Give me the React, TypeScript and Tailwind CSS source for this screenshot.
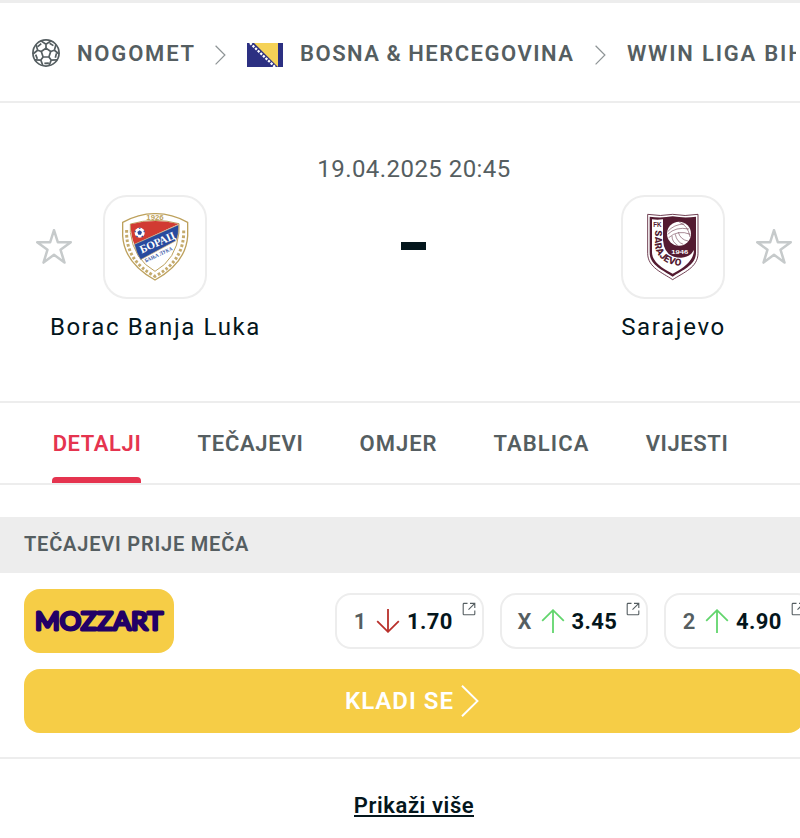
import React from "react"
import { clsx } from "clsx"

const tabs = [
  { label: "DETALJI", className: "w-[89px] tracking-[0.6px]" },
  { label: "TEČAJEVI", className: "w-[106px] tracking-[0.7px]" },
  { label: "OMJER", className: "w-[78px] tracking-[1px]" },
  { label: "TABLICA", className: "w-[96px] tracking-[1.1px]" },
  { label: "VIJESTI", className: "w-[83px] tracking-[0.6px]" },
]

const odds = [
  { pick: "1", value: "1.70", trend: "down" },
  { pick: "X", value: "3.45", trend: "up" },
  { pick: "2", value: "4.90", trend: "up" },
]

const angles = [0, 72, 144, 216, 288]

function BallIcon() {
  return (
    <svg className="-mt-[2px] h-7 w-7 shrink-0" viewBox="-14 -14 28 28" fill="none" stroke="#555e61" strokeWidth="1.7" strokeLinejoin="round">
      <circle r="13.1" />
      <path d="M0-4.9 4.7-1.5 2.9 4H-2.9L-4.7-1.5Z" />
      {angles.map((a) => (
        <path key={a} transform={`rotate(${a})`} d="M0-4.9V-8.8M-5-12.1 0-8.8 5-12.1M3.6-9.8 7.4-7.4" />
      ))}
    </svg>
  )
}

function Chevron() {
  return (
    <svg className="mt-[3px] h-5 w-3 shrink-0" viewBox="0 0 12 20" fill="none" stroke="#8e9496" strokeWidth="1.2">
      <path d="M.6.8 9.9 10 .6 19.4" />
    </svg>
  )
}

function Flag() {
  return (
    <svg className="mt-[3px] h-6 w-9 shrink-0" viewBox="0 0 36 24">
      <path fill="#2c3082" d="M0 0h36v24H0z" />
      <path fill="#f5d257" d="M7 0h24v24z" />
      <path d="M3 0 28 24" stroke="#fff" strokeWidth="2.3" strokeDasharray="2.3 1.3" />
    </svg>
  )
}

function Star() {
  return (
    <svg className="h-9 w-9 shrink-0" viewBox="0 0 36 36" fill="none" stroke="#c6cacb" strokeWidth="2.5" strokeLinejoin="round">
      <path d="M18 1.2 21.8 13.2H34.8L24.5 20.7 28.5 33.6 18 25.8 7.5 33.6 11.5 20.7 1.2 13.2H14.2Z" />
    </svg>
  )
}

function BoracCrest() {
  return (
    <svg className="h-[90px] w-[90px]" viewBox="0 6 270 270">
      <path d="M38 67Q88 40 135 41Q184 40 233 67V108Q228 189 135 240Q43 189 38 108Z" fill="#fff" stroke="#bda15c" strokeWidth="4" />
      <path d="M50 90Q46 182 135 229Q224 182 221 90" fill="none" stroke="#c4aa6c" strokeWidth="9" strokeDasharray="8 6" />
      <path d="M61 72Q135 51 207 71V98Q199 178 135 214Q71 178 61 98Z" fill="#fff" stroke="#bda15c" strokeWidth="3" />
      <path d="M62 73Q135 53 206 72L73 133Q63 111 62 73Z" fill="#d13b32" />
      <path d="M73 133 206 74Q207 101 200 121L92 179Q80 163 73 133Z" fill="#284a9e" stroke="#c8ad77" strokeWidth="2" />
      <circle cx="89" cy="98" r="15" fill="#fff" />
      <path d="M89 91 96 96 93 104H85L82 96Z" fill="#284a9e" />
      <path d="M89 83V86M104 94 101 95M98 111 96 108M80 111 82 108M74 94 77 95" stroke="#284a9e" strokeWidth="5" />
      <text x="135" y="59" textAnchor="middle" textLength="52" lengthAdjust="spacingAndGlyphs" fontFamily="Liberation Sans, sans-serif" fontSize="20" fontWeight="700" fill="#bda15c">1926</text>
      <g transform="rotate(-24 143 127)">
        <text x="142" y="138" textAnchor="middle" textLength="112" lengthAdjust="spacingAndGlyphs" fontFamily="Liberation Serif, serif" fontSize="34" fontWeight="700" fill="#fff">БОРАЦ</text>
      </g>
      <g transform="rotate(-25 148 164)">
        <text x="146" y="168" textAnchor="middle" textLength="90" lengthAdjust="spacingAndGlyphs" fontFamily="Liberation Serif, serif" fontSize="16" fontWeight="700" fill="#284a9e">БАЊА ЛУКА</text>
      </g>
    </svg>
  )
}

function SarajevoCrest() {
  return (
    <svg className="h-[90px] w-[90px]" viewBox="-6 6 270 270">
      <path d="M53 43Q92 50 128 43Q165 50 204 43V160C204 202 160 218 128 239C97 218 53 202 53 160Z" fill="#fff" stroke="#541b31" strokeWidth="2.5" />
      <path d="M59 50Q93 55 128 49Q164 55 198 50V158C198 195 158 210 128 230C98 210 59 195 59 158Z" fill="#541b31" />
      <path d="M66 58Q82 60 99 58V121Q103 174 154 173Q181 171 192 150Q191 190 128 221Q66 191 66 157Z" fill="#fff" />
      <circle cx="147" cy="101" r="36" fill="#fff" />
      <g fill="none" stroke="#541b31" strokeWidth="1.5">
        <path d="M113 95Q131 73 163 72M113 103Q137 79 177 87M116 113Q144 88 181 103M145 97Q151 119 174 123M136 103Q140 126 160 133M126 108Q126 126 143 136M148 67Q174 76 180 111" />
      </g>
      <text x="149" y="161" textAnchor="middle" textLength="51" lengthAdjust="spacingAndGlyphs" fontFamily="Liberation Sans, sans-serif" fontSize="18" fontWeight="700" fill="#fff">1946</text>
      <text x="82" y="81" textAnchor="middle" textLength="25" lengthAdjust="spacingAndGlyphs" fontFamily="Liberation Sans, sans-serif" fontSize="19" fontWeight="700" fill="#541b31">FK</text>
      <path id="club-name-curve" d="M74 91V126Q76 196 166 199" fill="none" />
      <text fontFamily="Roboto, sans-serif" fontSize="29" fontWeight="900" letterSpacing="0.8" fill="#541b31">
        <textPath href="#club-name-curve">SARAJEVO</textPath>
      </text>
    </svg>
  )
}

function Team({ name, children }: { name: string; children: React.ReactNode }) {
  return (
    <div className="flex flex-col items-center">
      <div className="flex h-[104px] w-[104px] items-center justify-center rounded-3xl border-2 border-[#ededed]">{children}</div>
      <div className="mt-3 h-8 pl-px text-2xl leading-8 tracking-[1.65px] whitespace-nowrap text-[#04161c]">{name}</div>
    </div>
  )
}

function TrendArrow({ trend }: { trend: string }) {
  return (
    <svg className="h-6 w-6 shrink-0" viewBox="0 0 24 24" fill="none" stroke={trend === "up" ? "#62d56d" : "#b9302b"} strokeWidth="1.8">
      {trend === "up" ? <path d="M12 24V1.2M1.2 11.8 12 1.2 22.8 11.8" /> : <path d="M12 0V22.8M1.2 12.2 12 22.8 22.8 12.2" />}
    </svg>
  )
}

function ExternalIcon() {
  return (
    <svg className="absolute top-[7px] right-[6px] h-3.5 w-3.5" viewBox="0 0 14 14" fill="none" stroke="#555e61" strokeWidth="1.1">
      <path d="M5.5 1.4H2Q1.2 1.4 1.2 2.2V12Q1.2 12.8 2 12.8H12Q12.8 12.8 12.8 12V8.5M8 1.4H12.8V6M12.8 1.4 6.5 7.6" />
    </svg>
  )
}

export default function App() {
  return (
    <div className="h-[838px] w-[800px] overflow-hidden bg-white font-['Roboto',sans-serif] text-[#555e61]">
      <div className="w-[828px]">
        <nav className="h-[103px] border-t-[3px] border-b-2 border-[#ededed]">
          <div className="flex h-full w-[796px] items-center overflow-hidden pt-[3px] pl-8 text-[22px] font-semibold whitespace-nowrap">
            <BallIcon />
            <span className="ml-[17px] w-[138px] shrink-0 tracking-[1.8px]">NOGOMET</span>
            <Chevron />
            <div className="w-5 shrink-0" />
            <Flag />
            <span className="ml-[17px] w-[295px] shrink-0 tracking-[1.5px] [word-spacing:-1px]">BOSNA &amp; HERCEGOVINA</span>
            <Chevron />
            <span className="ml-5 shrink-0 tracking-[1.8px]">WWIN LIGA BIH</span>
          </div>
        </nav>

        <section className="flex h-[300px] border-b-2 border-[#ededed] pt-[92px]">
          <div className="flex w-[103px] shrink-0 pt-[34px] pl-9">
            <Star />
          </div>
          <div className="flex w-[104px] shrink-0 justify-center">
            <Team name="Borac Banja Luka"><BoracCrest /></Team>
          </div>
          <div className="-mt-[42px] flex flex-1 flex-col items-center">
            <div className="text-2xl leading-8 tracking-[0.45px] whitespace-nowrap">19.04.2025 20:45</div>
            <div className="mt-[57px] mr-[2px] h-2 w-[25px] bg-[#04161c]" />
          </div>
          <div className="flex w-[104px] shrink-0 justify-center">
            <Team name="Sarajevo"><SarajevoCrest /></Team>
          </div>
          <div className="flex w-[103px] shrink-0 pt-[34px] pl-[31px]">
            <Star />
          </div>
        </section>

        <div className="flex h-[82px] gap-14 border-b-2 border-[#ededed] pl-[52px]">
          {tabs.map((tab, i) => (
            <div
              key={tab.label}
              className={clsx("flex h-20 shrink-0 flex-col items-center justify-between text-[22px] font-semibold whitespace-nowrap", tab.className, i === 0 && "text-[#e5344f]")}
            >
              <span className="pt-[25px] pl-px leading-8">{tab.label}</span>
              {i === 0 && <div className="h-1.5 w-full rounded-t-[4px] bg-[#e5344f]" />}
            </div>
          ))}
        </div>

        <h2 className="mt-8 flex h-14 items-center bg-[#ededed] pb-0.5 pl-6 text-[20px] font-semibold tracking-[0.8px]">TEČAJEVI PRIJE MEČA</h2>

        <div className="h-[186px] border-b-2 border-[#ededed] pt-4 pl-6">
          <div className="flex items-center">
            <div className="flex h-16 w-[150px] items-center justify-center rounded-2xl bg-[#f6cd46]">
              <svg className="h-8 w-[134px]" viewBox="0 0 134 32">
                <text x="3" y="25" textLength="128" lengthAdjust="spacingAndGlyphs" fontFamily="Lato, sans-serif" fontSize="25" fontWeight="400" fill="#220066" stroke="#220066" strokeWidth="2.9" strokeLinejoin="round">MOZZART</text>
              </svg>
            </div>
            <div className="ml-[161px] flex gap-4">
              {odds.map((odd) => (
                <div key={odd.pick} className="relative flex h-14 w-[148.5px] items-center rounded-2xl border-2 border-[#ededed] text-[22px] font-semibold">
                  <span className="w-[39px] shrink-0 pl-[7px] text-center">{odd.pick}</span>
                  <TrendArrow trend={odd.trend} />
                  <span className="pl-[7px] font-bold tracking-[0.4px] text-[#04161c]">{odd.value}</span>
                  <ExternalIcon />
                </div>
              ))}
            </div>
          </div>
          <div className="mt-4 flex h-16 w-[780px] items-center justify-center rounded-2xl bg-[#f6cd46] pr-[4px] text-2xl font-semibold tracking-[1px] text-white">
            KLADI SE
            <svg className="ml-[7px] h-8 w-[18px]" viewBox="0 0 18 32" fill="none" stroke="currentColor" strokeWidth="1.9">
              <path d="M1 .8 16.5 16 1 31.3" />
            </svg>
          </div>
        </div>

        <div className="flex justify-center pt-[37px]">
          <a className="border-b-2 border-[#04161c] text-[22px] leading-[19px] font-semibold tracking-[0.6px] text-[#04161c]">Prikaži više</a>
        </div>
      </div>
    </div>
  )
}
